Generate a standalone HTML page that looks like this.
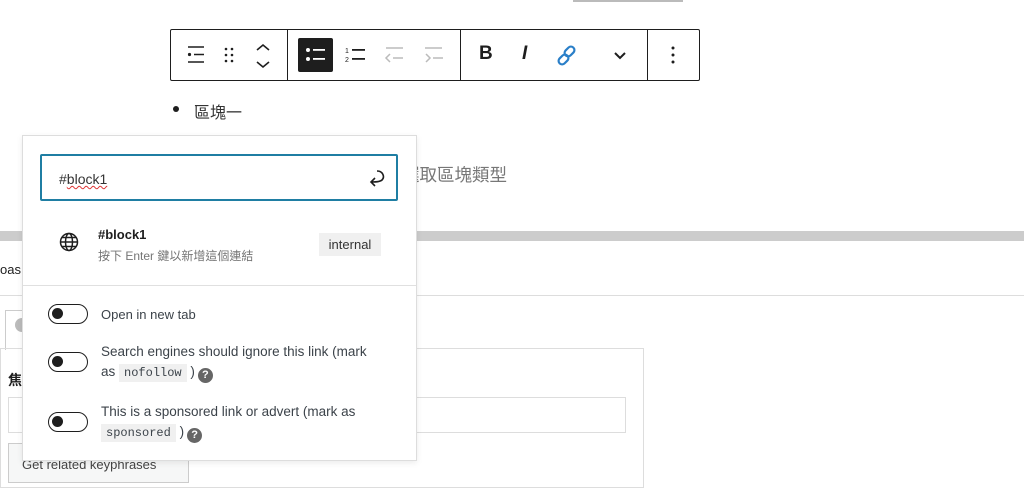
<!DOCTYPE html>
<html><head><meta charset="utf-8"><style>
*{box-sizing:border-box;margin:0;padding:0}
body{width:1024px;height:474px;overflow:hidden;background:#fff;position:relative;font-family:"Liberation Sans","Noto Sans CJK TC",sans-serif;color:#1e1e1e}
.abs{position:absolute}
.tb{left:170px;top:29px;width:530px;height:52px;border:1px solid #1e1e1e;border-radius:2px}
.sep{top:0;width:1px;height:50px;background:#1e1e1e}
svg{position:absolute}
.tog{width:40px;height:20px;border:1.5px solid #1e1e1e;border-radius:10px}
.tog:after{content:"";position:absolute;left:3px;top:3px;width:11px;height:11px;border-radius:50%;background:#1e1e1e}
.lbl{font-size:13px;color:#3c434a;line-height:20px}
code{font-family:"Liberation Mono",monospace;font-size:12px;background:#f0f0f0;padding:2px 5px}
.q{display:inline-block;width:15px;height:15px;border-radius:50%;background:#666;color:#fff;font-size:11px;font-weight:bold;text-align:center;line-height:15px;vertical-align:-2px;margin-left:3px}
</style></head><body>
<div class="abs" style="left:573px;top:0;width:110px;height:2px;background:#bbb"></div>

<div class="abs tb">
 <div class="abs sep" style="left:116px"></div>
 <div class="abs sep" style="left:289px"></div>
 <div class="abs sep" style="left:476px"></div>
 <svg style="left:16px;top:15px" width="20" height="20" viewBox="0 0 20 20"><path d="M1 2h16M7 9.5h10M1 17h16" stroke="#1e1e1e" stroke-width="1.6"/><circle cx="2.5" cy="9.5" r="1.6" fill="#1e1e1e"/></svg>
 <svg style="left:52px;top:16px" width="14" height="18"><g fill="#1e1e1e"><circle cx="3" cy="3" r="1.3"/><circle cx="9" cy="3" r="1.3"/><circle cx="3" cy="9" r="1.3"/><circle cx="9" cy="9" r="1.3"/><circle cx="3" cy="15" r="1.3"/><circle cx="9" cy="15" r="1.3"/></g></svg>
 <svg style="left:84px;top:12px" width="16" height="28"><path d="M2 8l6-5 6 5M2 20l6 5 6-5" fill="none" stroke="#1e1e1e" stroke-width="1.6"/></svg>
 <div class="abs" style="left:127px;top:8px;width:35px;height:34px;background:#1e1e1e;border-radius:2px"></div>
 <svg style="left:134px;top:16px" width="22" height="18"><g fill="#fff"><circle cx="3" cy="4" r="2"/><circle cx="3" cy="13" r="2"/><rect x="8" y="3" width="12" height="1.8"/><rect x="8" y="12" width="12" height="1.8"/></g></svg>
 <svg style="left:174px;top:16px" width="22" height="18"><text x="0" y="7" font-size="7" fill="#1e1e1e" font-family="Liberation Sans">1</text><text x="0" y="16" font-size="7" fill="#1e1e1e" font-family="Liberation Sans">2</text><rect x="7" y="3" width="13" height="1.8" fill="#1e1e1e"/><rect x="7" y="12" width="13" height="1.8" fill="#1e1e1e"/></svg>
 <svg style="left:212px;top:16px" width="22" height="18"><path d="M3 2h17M10 12h10M7 8l-4 4 4 4" fill="none" stroke="#bbb" stroke-width="1.5"/></svg>
 <svg style="left:252px;top:16px" width="22" height="18"><path d="M2 2h17M10 12h10M3 8l4 4-4 4" fill="none" stroke="#bbb" stroke-width="1.5"/></svg>
 <div class="abs" style="left:308px;top:13px;font-size:19px;font-weight:bold">B</div>
 <div class="abs" style="left:351px;top:13px;font-size:19px;font-style:italic;font-weight:bold">I</div>
 <svg style="left:385px;top:15px" width="22" height="22" viewBox="0 0 22 22"><g fill="none" stroke="#2a7fc8" stroke-width="2.2"><rect x="10" y="1" width="7" height="11" rx="3.5" transform="rotate(45 13.5 6.5)"/><rect x="4" y="9" width="7" height="11" rx="3.5" transform="rotate(45 7.5 14.5)"/></g></svg>
 <svg style="left:442px;top:21px" width="14" height="10"><path d="M2 2l5 5 5-5" fill="none" stroke="#1e1e1e" stroke-width="2"/></svg>
 <svg style="left:499px;top:15px" width="6" height="20"><g fill="#1e1e1e"><circle cx="3" cy="3" r="1.5"/><circle cx="3" cy="10" r="1.5"/><circle cx="3" cy="17" r="1.5"/></g></svg>
</div>

<div class="abs" style="left:173px;top:106px;width:6px;height:6px;border-radius:50%;background:#1e1e1e"></div>
<div class="abs" style="left:194px;top:99px;font-size:16px;color:#333">區塊一</div>
<div class="abs" style="left:402px;top:162px;font-size:17.5px;color:#777">選取區塊類型</div>

<div class="abs" style="left:0;top:231px;width:1024px;height:10px;background:#ccc"></div>
<div class="abs" style="left:0;top:262px;font-size:13px">oas</div>
<div class="abs" style="left:0;top:295px;width:1024px;height:1px;background:#ddd"></div>
<div class="abs" style="left:5px;top:310px;width:60px;height:40px;border:1px solid #ccc;border-bottom:none"></div>
<div class="abs" style="left:15px;top:318px;width:14px;height:14px;border-radius:50%;background:#bbb"></div>
<div class="abs" style="left:0;top:348px;width:644px;height:140px;border:1px solid #ddd"></div>
<div class="abs" style="left:8px;top:370px;font-size:14px;font-weight:bold">焦</div>
<div class="abs" style="left:8px;top:397px;width:618px;height:36px;border:1px solid #ddd"></div>
<div class="abs" style="left:8px;top:443px;width:181px;height:40px;border:1px solid #ccc;background:#f6f7f7;font-size:13px;padding:13px 0 0 13px;color:#444">Get related keyphrases</div>

<div class="abs" style="left:22px;top:135px;width:395px;height:326px;background:#fff;border:1px solid #ddd;box-shadow:0 2px 6px rgba(0,0,0,.08)">
 <div class="abs" style="left:17px;top:18px;width:358px;height:47px;border:2px solid #1f7ea3;border-radius:2px"></div>
 <div class="abs" style="left:36px;top:35px;font-size:14px;color:#333">#<span style="text-decoration:underline wavy #d33;text-decoration-thickness:1px">block1</span></div>
 <svg style="left:343px;top:33px" width="22" height="22"><path d="M11 2c6 0 8 6 5 9-2 2-6 2-10 2M9 9l-4 4 4 4" fill="none" stroke="#1e1e1e" stroke-width="1.6"/></svg>
 <svg style="left:36px;top:96px" width="20" height="20" viewBox="0 0 20 20"><g fill="none" stroke="#1e1e1e" stroke-width="1.5"><circle cx="10" cy="10" r="8.5"/><ellipse cx="10" cy="10" rx="3.5" ry="8.5"/><path d="M1.5 10h17M3 5.5h14M3 14.5h14"/></g></svg>
 <div class="abs" style="left:75px;top:91px;font-size:13px;font-weight:bold">#block1</div>
 <div class="abs" style="left:75px;top:111px;font-size:12px;color:#757575">按下 Enter 鍵以新增這個連結</div>
 <div class="abs" style="left:296px;top:97px;width:62px;height:23px;background:#f0f0f0;font-size:13px;color:#333;text-align:center;line-height:23px">internal</div>
 <div class="abs" style="left:0;top:149px;width:393px;height:1px;background:#e0e0e0"></div>
 <div class="abs tog" style="left:25px;top:168px"></div>
 <div class="abs lbl" style="left:78px;top:169px">Open in new tab</div>
 <div class="abs tog" style="left:25px;top:216px"></div>
 <div class="abs lbl" style="left:78px;top:206px;width:300px;font-size:13.5px">Search engines should ignore this link (mark<br>as <code>nofollow</code> )<span class="q">?</span></div>
 <div class="abs tog" style="left:25px;top:276px"></div>
 <div class="abs lbl" style="left:78px;top:266px;width:300px;font-size:13.5px">This is a sponsored link or advert (mark as<br><code>sponsored</code> )<span class="q">?</span></div>
</div>
</body></html>
